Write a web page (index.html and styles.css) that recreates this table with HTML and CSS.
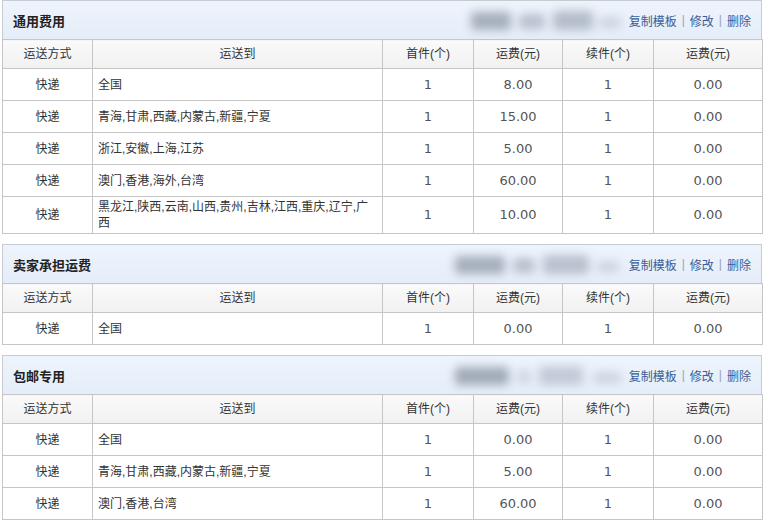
FILE: index.html
```html
<!DOCTYPE html>
<html lang="zh-CN">
<head>
<meta charset="utf-8">
<title>运费模板</title>
<link rel="stylesheet" href="styles.css">
</head>
<body>
<div class="page">

  <section class="panel">
    <div class="panel-head">
      <h2 class="title">通用费用</h2>
      <div class="smudge s1"><i class="b b1"></i><i class="b b2"></i><i class="b b3"></i><i class="b b4"></i></div>
      <div class="ops"><a href="#">复制模板</a><span class="sep">|</span><a href="#">修改</a><span class="sep">|</span><a href="#">删除</a></div>
    </div>
    <table class="grid">
      <colgroup><col class="c1"><col class="c2"><col class="c3"><col class="c4"><col class="c5"><col class="c6"></colgroup>
      <thead><tr><th>运送方式</th><th>运送到</th><th>首件(个)</th><th>运费(元)</th><th>续件(个)</th><th>运费(元)</th></tr></thead>
      <tbody>
        <tr><td>快递</td><td class="area">全国</td><td class="num">1</td><td class="num">8.00</td><td class="num">1</td><td class="num">0.00</td></tr>
        <tr><td>快递</td><td class="area">青海,甘肃,西藏,内蒙古,新疆,宁夏</td><td class="num">1</td><td class="num">15.00</td><td class="num">1</td><td class="num">0.00</td></tr>
        <tr><td>快递</td><td class="area">浙江,安徽,上海,江苏</td><td class="num">1</td><td class="num">5.00</td><td class="num">1</td><td class="num">0.00</td></tr>
        <tr><td>快递</td><td class="area">澳门,香港,海外,台湾</td><td class="num">1</td><td class="num">60.00</td><td class="num">1</td><td class="num">0.00</td></tr>
        <tr class="tall"><td>快递</td><td class="area">黑龙江,陕西,云南,山西,贵州,吉林,江西,重庆,辽宁,广西</td><td class="num">1</td><td class="num">10.00</td><td class="num">1</td><td class="num">0.00</td></tr>
      </tbody>
    </table>
  </section>

  <section class="panel">
    <div class="panel-head">
      <h2 class="title">卖家承担运费</h2>
      <div class="smudge s2"><i class="b b1"></i><i class="b b2"></i><i class="b b3"></i><i class="b b4"></i></div>
      <div class="ops"><a href="#">复制模板</a><span class="sep">|</span><a href="#">修改</a><span class="sep">|</span><a href="#">删除</a></div>
    </div>
    <table class="grid">
      <colgroup><col class="c1"><col class="c2"><col class="c3"><col class="c4"><col class="c5"><col class="c6"></colgroup>
      <thead><tr><th>运送方式</th><th>运送到</th><th>首件(个)</th><th>运费(元)</th><th>续件(个)</th><th>运费(元)</th></tr></thead>
      <tbody>
        <tr><td>快递</td><td class="area">全国</td><td class="num">1</td><td class="num">0.00</td><td class="num">1</td><td class="num">0.00</td></tr>
      </tbody>
    </table>
  </section>

  <section class="panel">
    <div class="panel-head">
      <h2 class="title">包邮专用</h2>
      <div class="smudge s3"><i class="b b1"></i><i class="b b2"></i><i class="b b3"></i><i class="b b4"></i></div>
      <div class="ops"><a href="#">复制模板</a><span class="sep">|</span><a href="#">修改</a><span class="sep">|</span><a href="#">删除</a></div>
    </div>
    <table class="grid">
      <colgroup><col class="c1"><col class="c2"><col class="c3"><col class="c4"><col class="c5"><col class="c6"></colgroup>
      <thead><tr><th>运送方式</th><th>运送到</th><th>首件(个)</th><th>运费(元)</th><th>续件(个)</th><th>运费(元)</th></tr></thead>
      <tbody>
        <tr><td>快递</td><td class="area">全国</td><td class="num">1</td><td class="num">0.00</td><td class="num">1</td><td class="num">0.00</td></tr>
        <tr><td>快递</td><td class="area">青海,甘肃,西藏,内蒙古,新疆,宁夏</td><td class="num">1</td><td class="num">5.00</td><td class="num">1</td><td class="num">0.00</td></tr>
        <tr><td>快递</td><td class="area">澳门,香港,台湾</td><td class="num">1</td><td class="num">60.00</td><td class="num">1</td><td class="num">0.00</td></tr>
      </tbody>
    </table>
  </section>

</div>
</body>
</html>
```

FILE: styles.css
```css
html, body {
  margin: 0;
  padding: 0;
  background: #ffffff;
}
body {
  font-family: "Liberation Sans", "Noto Sans CJK SC", sans-serif;
  font-size: 12px;
  color: #333333;
}
.page {
  padding: 0 5px 0 2px;
  display: flex;
  flex-direction: column;
  gap: 10px;
}
.panel {
  width: 760px;
}
.panel-head {
  height: 38px;
  border: 1px solid #c7ccd4;
  border-bottom: 0;
  background: linear-gradient(#eef4fc, #e4edf9);
  display: flex;
  align-items: center;
  padding: 0 10px 0 10px;
}
.title {
  margin: 0;
  font-size: 13px;
  font-weight: bold;
  color: #222222;
  flex: 1;
}
.smudge {
  position: relative;
  height: 30px;
  width: 160px;
  margin-right: 2px;
}
.b {
  position: absolute;
  display: block;
  background: #8a93a2;
  filter: blur(5px);
  opacity: 0.7;
  border-radius: 4px;
}
.b1 { left: 4px; top: 7px; width: 40px; height: 18px; }
.b2 { left: 52px; top: 9px; width: 26px; height: 15px; opacity: 0.5; }
.b3 { left: 86px; top: 6px; width: 40px; height: 19px; opacity: 0.55; }
.b4 { left: 132px; top: 12px; width: 22px; height: 11px; opacity: 0.3; }
.s2 { width: 180px; }
.s2 .b1 { left: 8px; width: 50px; }
.s2 .b2 { left: 66px; width: 22px; }
.s2 .b3 { left: 96px; width: 46px; opacity: 0.5; }
.s2 .b4 { left: 150px; }
.s3 { width: 180px; }
.s3 .b1 { left: 8px; width: 54px; opacity: 0.75; }
.s3 .b2 { left: 70px; width: 14px; opacity: 0.25; }
.s3 .b3 { left: 92px; width: 44px; opacity: 0.4; }
.s3 .b4 { left: 146px; width: 28px; }
.ops {
  display: flex;
  align-items: center;
  white-space: nowrap;
}
.ops a {
  color: #3a5d96;
  text-decoration: none;
}
.sep {
  color: #9aa3b0;
  margin: 0 5px;
}
.grid {
  width: 760px;
  border-collapse: collapse;
  table-layout: fixed;
}
.c1 { width: 90px; }
.c2 { width: 290px; }
.c3 { width: 91px; }
.c4 { width: 89px; }
.c5 { width: 91px; }
.c6 { width: 109px; }
.grid th, .grid td {
  border: 1px solid #c6c6c6;
  text-align: center;
  vertical-align: middle;
  padding: 0 5px;
  line-height: 16px;
}
.grid th {
  height: 28px;
  font-weight: normal;
  background: linear-gradient(#fafafa, #f1f1f1);
  color: #333333;
}
.grid td {
  height: 31px;
}
.grid tr.tall td {
  height: 36px;
}
.grid td.area {
  text-align: left;
  padding: 0 8px 0 5px;
}
.grid td.num {
  font-family: "DejaVu Sans", sans-serif;
  font-size: 13px;
  color: #555555;
}
```
